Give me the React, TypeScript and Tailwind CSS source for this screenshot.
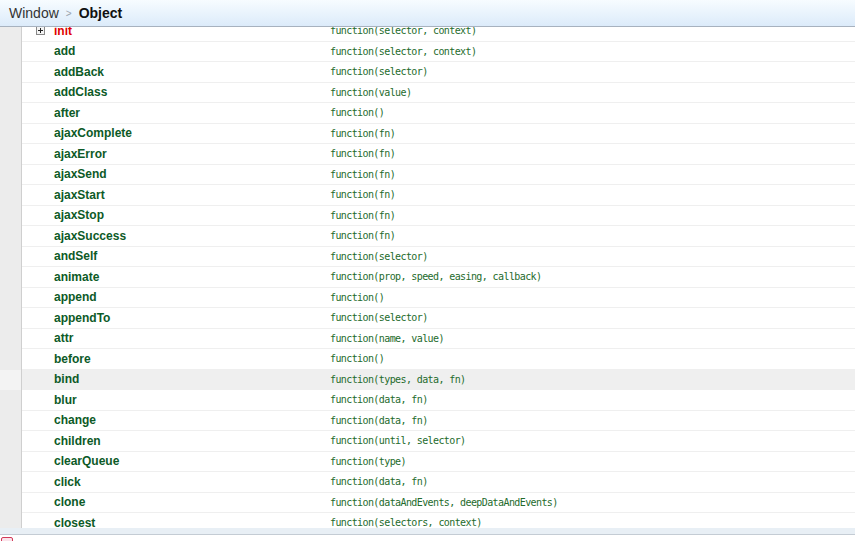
const rows: [string, string][] = [
  ["init", "function(selector, context)"],
  ["add", "function(selector, context)"],
  ["addBack", "function(selector)"],
  ["addClass", "function(value)"],
  ["after", "function()"],
  ["ajaxComplete", "function(fn)"],
  ["ajaxError", "function(fn)"],
  ["ajaxSend", "function(fn)"],
  ["ajaxStart", "function(fn)"],
  ["ajaxStop", "function(fn)"],
  ["ajaxSuccess", "function(fn)"],
  ["andSelf", "function(selector)"],
  ["animate", "function(prop, speed, easing, callback)"],
  ["append", "function()"],
  ["appendTo", "function(selector)"],
  ["attr", "function(name, value)"],
  ["before", "function()"],
  ["bind", "function(types, data, fn)"],
  ["blur", "function(data, fn)"],
  ["change", "function(data, fn)"],
  ["children", "function(until, selector)"],
  ["clearQueue", "function(type)"],
  ["click", "function(data, fn)"],
  ["clone", "function(dataAndEvents, deepDataAndEvents)"],
  ["closest", "function(selectors, context)"],
];

export default function App() {
  return (
    <div className="w-[855px] h-[541px] flex flex-col bg-white overflow-hidden" style={{ fontFamily: "'Liberation Sans', Arial, sans-serif" }}>
      {/* breadcrumb bar */}
      <div className="h-[27px] shrink-0 flex items-center gap-[7px] px-[9px] bg-gradient-to-b from-[#f7fcff] to-[#dcebfa] border-b border-[#a7b2bf]">
        <span className="text-[14px] text-[#333]">Window</span>
        <span className="text-[10px] text-[#9aa3ad]">&gt;</span>
        <span className="text-[14px] font-bold text-[#111]">Object</span>
      </div>

      {/* DOM property list (scrolled slightly, first row is cut) */}
      <div className="flex-1 overflow-hidden flex">
        <div className="w-[22px] shrink-0 bg-[#ececec] border-r border-[#cfcfcf] relative">
          <div className="absolute left-0 right-0 top-[342.5px] h-[20.5px] bg-[#f3f3f3]" />
        </div>
        <div className="flex-1 flex flex-col -mt-[6px]">
          {rows.map(([name, value]) => (
            <div
              key={name}
              className={`h-[20.5px] shrink-0 flex items-center border-b border-[#efefef] ${name === "bind" ? "bg-[#efefef]" : ""}`}
            >
              <div className="w-[308px] shrink-0 flex items-center">
                <div className="w-[32px] flex justify-end pr-[9px]">
                  {name === "init" && (
                    <div className="w-[9px] h-[9px] border border-[#888] bg-[#f4f4f4] relative">
                      <div className="absolute left-[1px] right-[1px] top-[3px] h-px bg-[#222]" />
                      <div className="absolute top-[1px] bottom-[1px] left-[3px] w-px bg-[#222]" />
                    </div>
                  )}
                </div>
                <span className={`text-[12px] font-bold ${name === "init" ? "text-[#e00000]" : "text-[#0d5a27]"}`}>{name}</span>
              </div>
              <span
                className="text-[10px] tracking-[-0.6px] text-[#246b2c] whitespace-pre"
                style={{ fontFamily: "'DejaVu Sans Mono', 'Liberation Mono', monospace" }}
              >
                {value}
              </span>
            </div>
          ))}
        </div>
      </div>

      {/* status strip */}
      <div className="h-[7px] shrink-0 bg-[#e8eff5] border-b border-[#c4ccd4]" />
      <div className="h-[6px] shrink-0 bg-white relative">
        <div className="absolute left-[1px] top-[2px] w-[12px] h-[8px] rounded-[2px] border border-[#d23a5a] bg-[#fbe3ea]" />
      </div>
    </div>
  );
}
